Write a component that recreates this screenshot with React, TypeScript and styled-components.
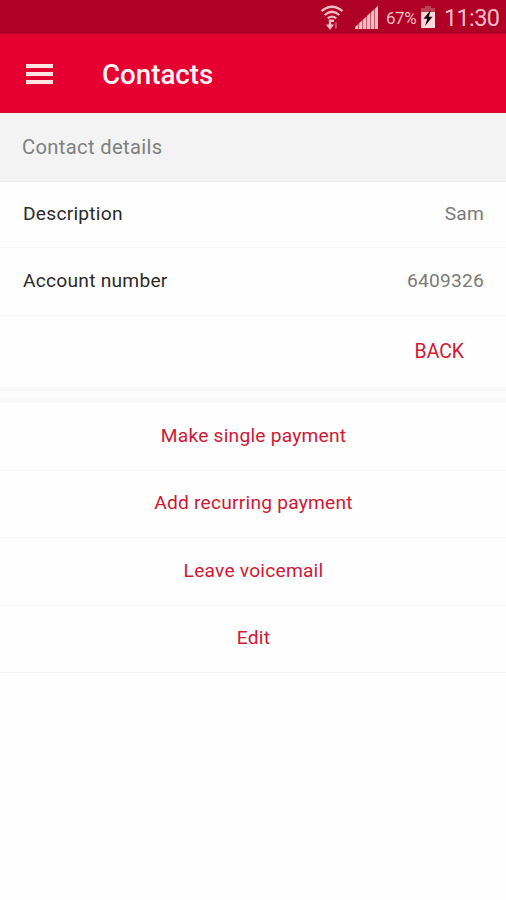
import React from "react";
import styled, { createGlobalStyle } from "styled-components";

const GlobalStyle = createGlobalStyle`
  * { box-sizing: border-box; }
  body { margin: 0; background: #fefefe; }
`;

const Screen = styled.div`
  display: flex;
  flex-direction: column;
  height: 900px;
  background: #fefefe;
  font-family: Roboto, "Liberation Sans", sans-serif;
  white-space: nowrap;
`;

const StatusBar = styled.div`
  display: flex;
  align-items: center;
  justify-content: flex-end;
  height: 34px;
  padding-right: 7px;
  background: #af0026;
  color: #f3bfc4;
`;

const WifiIcon = styled.svg`
  margin-right: 11px;
`;

const SignalIcon = styled.svg`
  margin-right: 8px;
`;

const BatteryLevel = styled.span`
  width: 31px;
  margin-right: 4px;
  padding-top: 2px;
  font-size: 17px;
  letter-spacing: -0.45px;
`;

const BatteryIcon = styled.svg`
  margin-right: 9px;
`;

const Clock = styled.span`
  width: 55px;
  padding-top: 2px;
  font-size: 23.5px;
  letter-spacing: -0.65px;
`;

const AppBar = styled.header`
  display: flex;
  align-items: center;
  height: 79px;
  padding: 1px 26px 0;
  background: #e60032;
  border-bottom: 1px solid #d90a2c;
`;

const MenuButton = styled.button`
  display: flex;
  flex-direction: column;
  gap: 4px;
  width: 28px;
  margin: 0 48px 0 0;
  padding: 0;
  border: 0;
  background: none;
`;

const MenuLine = styled.span`
  width: 27px;
  height: 4px;
  background: #ffe3e3;
`;

const Title = styled.h1`
  margin: 0;
  padding-top: 2px;
  color: #fff4f3;
  font-size: 27.7px;
  font-weight: 500;
`;

const SectionHeader = styled.h2`
  display: flex;
  align-items: center;
  height: 69px;
  margin: 0;
  padding: 0 22px 1px;
  background: #f3f3f3;
  border-bottom: 1px solid #efefef;
  color: #808080;
  font-size: 20.2px;
  font-weight: 400;
  letter-spacing: 0.33px;
`;

const DetailRow = styled.div<{ $height: number }>`
  display: flex;
  align-items: center;
  justify-content: space-between;
  height: ${(p) => p.$height}px;
  padding: 0 22px 2px 23px;
  border-bottom: 1px solid #f6f6f6;
  font-size: 19.2px;
`;

const DetailLabel = styled.span`
  color: #2b2b2b;
  letter-spacing: 0.24px;
`;

const DetailValue = styled.span`
  color: #7a7a7a;
  letter-spacing: 0.2px;
`;

const BackRow = styled.div`
  display: flex;
  align-items: center;
  justify-content: flex-end;
  height: 71px;
  padding: 0 42px 1px 0;
`;

const TextButton = styled.button`
  padding: 0;
  border: 0;
  background: none;
  color: #cf1833;
  font: 400 19.4px Roboto, "Liberation Sans", sans-serif;
`;

const Divider = styled.div`
  height: 16px;
  background: #fcfcfc;
  border-top: 4px solid #f8f8f8;
  border-bottom: 4px solid #f9f9f9;
`;

const ActionButton = styled(TextButton)<{ $faint?: boolean }>`
  width: 100%;
  height: 67.5px;
  padding: 0 0 2px 1px;
  border-bottom: 1px solid ${(p) => (p.$faint ? "#fafafa" : "#f5f5f5")};
  text-align: center;
  font-size: 19.2px;
  letter-spacing: 0.22px;
`;

const actions = [
  "Make single payment",
  "Add recurring payment",
  "Leave voicemail",
  "Edit",
];

export default function App() {
  return (
    <Screen>
      <GlobalStyle />
      <StatusBar>
        <WifiIcon width="24" height="27" viewBox="0 0 24 27" fill="none" stroke="currentColor">
          <path d="M1.5 7.2Q12 -1.8 22.5 7.2" strokeWidth="2.4" />
          <path d="M4.7 11Q12 4.6 19.3 11" strokeWidth="2.3" />
          <path d="M7.8 14.4Q12 10.8 16.2 14.4" strokeWidth="2.2" />
          <path d="M10 15.5v6M9 16.8h5" strokeWidth="2.4" />
          <path d="M6 20.5h8L10 26z" fill="currentColor" stroke="none" />
          <path d="M15.8 18.5v6" stroke="#cf5868" strokeWidth="2" />
        </WifiIcon>
        <SignalIcon width="23" height="23" viewBox="0 0 23 23" fill="currentColor">
          <path d="M0 23V21L3 18.5V23zM4 23V17.5L7 14.8V23zM8 23V14L11 11V23zM12 23V10L15 7V23zM16 23V6.3L19 3.5V23zM20 23V2.5L23 0V23z" />
          <path d="M0 23V21L23 0V23z" opacity=".45" />
        </SignalIcon>
        <BatteryLevel>67%</BatteryLevel>
        <BatteryIcon width="14" height="22" viewBox="0 0 14 22">
          <path d="M4 0h6v2h4v5H0V2h4z" fill="#bd4354" />
          <path d="M0 6h14v16H0z" fill="#ffdada" />
          <path d="M9.7 4L2.5 12.7H6.3L4 20L11.5 10.7H7.8z" fill="#170008" />
        </BatteryIcon>
        <Clock>11:30</Clock>
      </StatusBar>
      <AppBar>
        <MenuButton aria-label="Menu">
          <MenuLine />
          <MenuLine />
          <MenuLine />
        </MenuButton>
        <Title>Contacts</Title>
      </AppBar>
      <SectionHeader>Contact details</SectionHeader>
      <DetailRow $height={66}>
        <DetailLabel>Description</DetailLabel>
        <DetailValue>Sam</DetailValue>
      </DetailRow>
      <DetailRow $height={68}>
        <DetailLabel>Account number</DetailLabel>
        <DetailValue>6409326</DetailValue>
      </DetailRow>
      <BackRow>
        <TextButton>BACK</TextButton>
      </BackRow>
      <Divider />
      {actions.map((label, i) => (
        <ActionButton key={label} $faint={i === 0}>
          {label}
        </ActionButton>
      ))}
    </Screen>
  );
}
